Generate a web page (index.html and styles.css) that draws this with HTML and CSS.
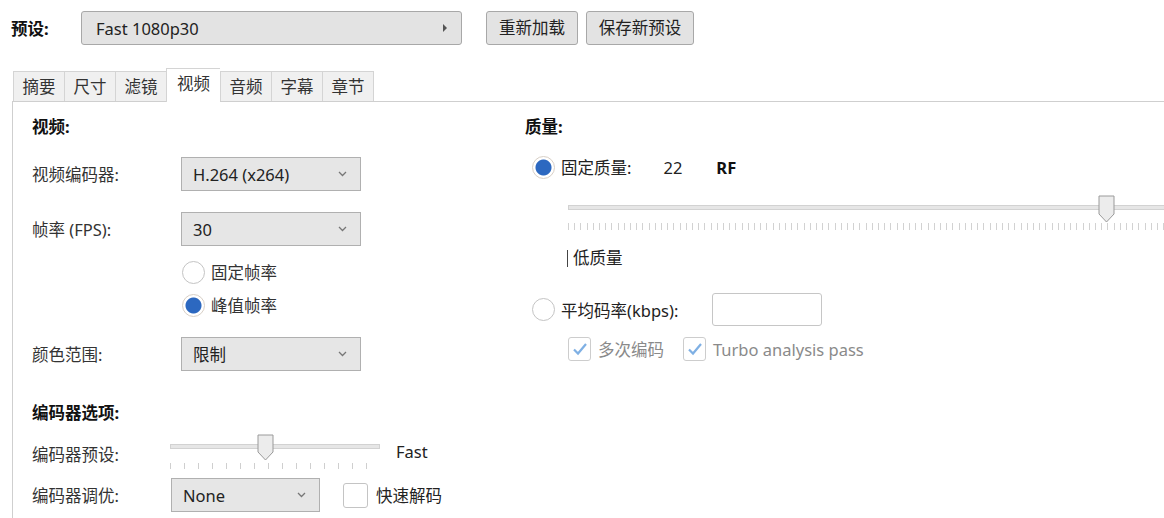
FILE: index.html
```html
<!DOCTYPE html>
<html lang="zh">
<head>
<meta charset="utf-8">
<title>视频</title>
<link rel="stylesheet" href="styles.css">
</head>
<body>
<div class="toolbar">
  <span class="preset-label">预设:</span>
  <div class="combo">
    <span>Fast 1080p30</span>
    <svg class="combo-arrow" width="6" height="10" viewBox="0 0 6 10"><path d="M1 1 L5 5 L1 9 Z" fill="#555"/></svg>
  </div>
  <button class="btn btn-reload">重新加载</button>
  <button class="btn btn-save">保存新预设</button>
</div>

<div class="tabs">
  <div class="tab">摘要</div>
  <div class="tab">尺寸</div>
  <div class="tab">滤镜</div>
  <div class="tab active">视频</div>
  <div class="tab">音频</div>
  <div class="tab">字幕</div>
  <div class="tab">章节</div>
</div>

<div class="panel">
  <div class="col-left">
    <div class="heading">视频:</div>

    <div class="row row-codec">
      <span class="label">视频编码器:</span>
      <div class="select"><span>H.264 (x264)</span><svg class="chev" width="9" height="6" viewBox="0 0 9 6"><path d="M1 1 L4.5 4.5 L8 1" fill="none" stroke="#777" stroke-width="1.3"/></svg></div>
    </div>

    <div class="row row-fps">
      <span class="label">帧率 (FPS):</span>
      <div class="select"><span>30</span><svg class="chev" width="9" height="6" viewBox="0 0 9 6"><path d="M1 1 L4.5 4.5 L8 1" fill="none" stroke="#777" stroke-width="1.3"/></svg></div>
    </div>

    <div class="radio-group">
      <div class="radio-line"><span class="radio"></span><span>固定帧率</span></div>
      <div class="radio-line second"><span class="radio checked"></span><span>峰值帧率</span></div>
    </div>

    <div class="row row-color">
      <span class="label">颜色范围:</span>
      <div class="select"><span>限制</span><svg class="chev" width="9" height="6" viewBox="0 0 9 6"><path d="M1 1 L4.5 4.5 L8 1" fill="none" stroke="#777" stroke-width="1.3"/></svg></div>
    </div>

    <div class="heading heading-enc">编码器选项:</div>

    <div class="row row-preset">
      <span class="label label-narrow">编码器预设:</span>
      <div class="slider slider-small">
        <div class="track"></div>
        <div class="ticks"></div>
        <svg class="thumb thumb-small" width="17" height="27" viewBox="0 0 17 27"><path d="M1 1 H16 V18 L8.5 26 L1 18 Z" fill="#ececec" stroke="#9a9a9a" stroke-width="1"/></svg>
      </div>
      <span class="fast">Fast</span>
    </div>

    <div class="row row-tune">
      <span class="label label-tune">编码器调优:</span>
      <div class="select select-none"><span>None</span><svg class="chev" width="9" height="6" viewBox="0 0 9 6"><path d="M1 1 L4.5 4.5 L8 1" fill="none" stroke="#777" stroke-width="1.3"/></svg></div>
      <span class="checkbox"></span>
      <span class="check-text">快速解码</span>
    </div>
  </div>

  <div class="col-right">
    <div class="heading">质量:</div>

    <div class="radio-line rf-line">
      <span class="radio checked"></span>
      <span class="rf-label">固定质量:</span>
      <span class="rf-value">22</span>
      <span class="rf-unit">RF</span>
    </div>

    <div class="slider slider-big">
      <div class="track"></div>
      <div class="ticks ticks-dense"></div>
      <svg class="thumb thumb-big" width="17" height="28" viewBox="0 0 17 28"><path d="M1 1 H16 V19 L8.5 27 L1 19 Z" fill="#ececec" stroke="#9a9a9a" stroke-width="1"/></svg>
    </div>

    <div class="low-label"><span class="bar"></span>低质量</div>

    <div class="radio-line abr-line">
      <span class="radio"></span>
      <span class="abr-label">平均码率(kbps):</span>
      <span class="input"></span>
    </div>

    <div class="checks">
      <span class="checkbox disabled"><svg width="16" height="14" viewBox="0 0 16 14"><path d="M2 7.5 L6 11.5 L14 2" fill="none" stroke="#7fb0e4" stroke-width="2.2"/></svg></span>
      <span class="check-text disabled-text">多次编码</span>
      <span class="checkbox disabled second-check"><svg width="16" height="14" viewBox="0 0 16 14"><path d="M2 7.5 L6 11.5 L14 2" fill="none" stroke="#7fb0e4" stroke-width="2.2"/></svg></span>
      <span class="check-text disabled-text">Turbo analysis pass</span>
    </div>
  </div>
</div>
</body>
</html>
```

FILE: styles.css
```css
* { box-sizing: border-box; }
html, body { margin: 0; padding: 0; background: #fff; }
body {
  font-family: "Noto Sans", "Noto Sans CJK SC", sans-serif;
  font-size: 16.5px;
  color: #333;
  width: 1164px;
  height: 518px;
  overflow: hidden;
}

/* toolbar */
.toolbar {
  display: flex;
  align-items: center;
  height: 34px;
  margin-top: 11px;
  padding-left: 11px;
}
.preset-label {
  width: 70px;
  font-weight: bold;
  color: #111;
}
.combo {
  width: 381px;
  height: 34px;
  display: flex;
  align-items: center;
  justify-content: space-between;
  padding: 0 13px 0 14px;
  background: #e3e3e3;
  border: 1px solid #a8a8a8;
  border-radius: 3px;
  color: #222;
}
.btn {
  height: 34px;
  font: inherit;
  color: #222;
  background: #e3e3e3;
  border: 1px solid #a8a8a8;
  border-radius: 3px;
  padding: 0 11px;
  line-height: 1;
}
.btn-reload { margin-left: 24px; width: 92px; }
.btn-save { margin-left: 8px; width: 108px; }

/* tabs */
.tabs {
  display: flex;
  align-items: flex-end;
  height: 30px;
  margin-top: 26px;
  margin-left: 13px;
  position: relative;
  z-index: 1;
}
.tab {
  height: 30px;
  line-height: 29px;
  padding: 0 8.5px;
  background: #f0f0f0;
  border: 1px solid #d4d4d4;
  border-right: none;
  border-bottom: none;
  color: #333;
}
.tab:last-child { border-right: 1px solid #d4d4d4; }
.tab.active {
  height: 34px;
  margin-bottom: -1px;
  padding: 0 10px;
  background: #fff;
}

/* panel */
.panel {
  display: flex;
  margin-left: 12px;
  height: 417px;
  border-top: 1px solid #cfcfcf;
  border-left: 1px solid #cfcfcf;
  padding: 15px 0 0 19px;
}
.col-left { width: 493px; flex: none; }
.col-right { flex: 1; }

.heading {
  height: 20px;
  line-height: 20px;
  font-weight: bold;
  color: #111;
}

.row {
  display: flex;
  align-items: center;
  height: 34px;
}
.label { width: 149px; flex: none; }
.row-codec { margin-top: 20px; }
.row-fps { margin-top: 21px; }
.row-color { margin-top: 20px; }

.select {
  width: 180px;
  height: 34px;
  display: flex;
  align-items: center;
  justify-content: space-between;
  padding: 0 13px 0 11px;
  background: #e6e6e6;
  border: 1px solid #b0b0b0;
  color: #222;
}
.select-none { width: 149px; }

.radio-group { margin-left: 150px; margin-top: 14px; }
.radio-line {
  display: flex;
  align-items: center;
  height: 24px;
}
.radio-line.second { margin-top: 9px; }
.radio {
  width: 23px;
  height: 23px;
  flex: none;
  border: 1px solid #c4c4c4;
  border-radius: 50%;
  background: #fff;
  margin-right: 6px;
}
.radio.checked {
  border-color: #d8cfc6;
  background: radial-gradient(circle, #2c68c0 0, #2c68c0 7.5px, #fff 8.5px);
}

.heading-enc { margin-top: 32px; }

.row-preset { margin-top: 11px; height: 36px; align-items: flex-start; }
.label-narrow { width: 138px; padding-top: 8px; }
.slider { position: relative; flex: none; }
.slider-small { width: 210px; height: 36px; }
.track {
  position: absolute;
  left: 0;
  right: 0;
  top: 10px;
  height: 5px;
  background: #e6e6e6;
  border: 1px solid #d2d2d2;
}
.ticks {
  position: absolute;
  left: 0;
  right: 0;
  top: 29px;
  height: 6px;
  background: repeating-linear-gradient(to right, #cfcfcf 0, #cfcfcf 1px, transparent 1px, transparent 14px);
}
.thumb { position: absolute; top: 0; }
.thumb-small { left: 87px; }
.fast { margin-left: 16px; padding-top: 6px; color: #222; }

.row-tune { margin-top: 8px; }
.label-tune { width: 139px; }
.checkbox {
  width: 25px;
  height: 25px;
  flex: none;
  border: 1px solid #c4c4c4;
  border-radius: 3px;
  background: #fff;
  display: inline-flex;
  align-items: center;
  justify-content: center;
}
.row-tune .checkbox { margin-left: 23px; }
.check-text { margin-left: 8px; color: #222; }

/* right column */
.rf-line { margin-top: 18px; margin-left: 7px; }
.rf-label { color: #222; }
.rf-value { margin-left: 32px; color: #222; }
.rf-unit { margin-left: 34px; font-weight: bold; color: #111; }

.slider-big { width: 640px; height: 36px; margin-top: 16px; margin-left: 43px; }
.slider-big .track { top: 10px; }
.ticks-dense {
  top: 28px;
  height: 7px;
  background: repeating-linear-gradient(to right, #d2d2d2 0, #d2d2d2 1px, transparent 1px, transparent 6.2px);
}
.thumb-big { left: 530px; }

.low-label {
  margin-top: 17px;
  margin-left: 42px;
  height: 20px;
  line-height: 20px;
  display: flex;
  align-items: center;
  color: #222;
}
.bar {
  width: 1px;
  height: 17px;
  background: #444;
  margin-right: 5px;
}

.abr-line { margin-top: 25px; margin-left: 7px; height: 33px; }
.abr-label { color: #222; }
.input {
  width: 110px;
  height: 33px;
  margin-left: 34px;
  border: 1px solid #c6c6c6;
  border-radius: 3px;
  background: #fff;
}

.checks {
  display: flex;
  align-items: center;
  height: 24px;
  margin-top: 11px;
  margin-left: 43px;
}
.checkbox.disabled { width: 23px; height: 24px; border-color: #cdcdcd; }
.disabled-text { color: #8a8a8a; }
.second-check { margin-left: 19px; }
.checks .check-text { margin-left: 7px; }
```
